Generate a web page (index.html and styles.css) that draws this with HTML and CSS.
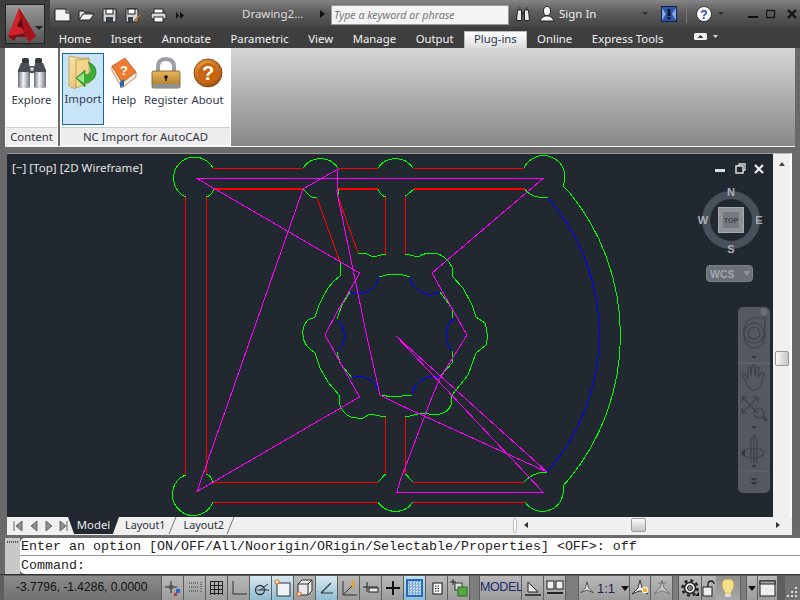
FILE: index.html
```html
<!DOCTYPE html>
<html lang="en">
<head>
<meta charset="utf-8">
<title>AutoCAD</title>
<link rel="stylesheet" href="styles.css">
</head>
<body>
<div class="app">
  <header class="head">
    <div class="logo">
      <svg width="40" height="40" viewBox="0 0 40 40">
        <path d="M14 4 L31 32 L24 38 L19 29 L11 31 L9 37 L3 32 Z" fill="#d3202a"/>
        <path d="M14 4 L31 32 L24 38 L19 29 L16 20 Z" fill="#a5141c"/>
        <path d="M12 22 L16 14 L19 25 Z" fill="#5c0d10"/>
        <path d="M3 32 L11 31 L19 29 L21 33 L11 33 L9 37 Z" fill="#7e1016"/>
        <path d="M30 22 h8 l-4 4 Z" fill="#222"/>
      </svg>
    </div>
    <div class="titlebar">
      <div class="qat">
        <svg class="q" width="17" height="14" viewBox="0 0 17 14"><path d="M1 1 H12 L16 5 V13 H1 Z" fill="#f2f2f2" stroke="#222"/><path d="M12 1 V5 H16" fill="#bbb" stroke="#222"/></svg>
        <svg class="q" width="17" height="14" viewBox="0 0 17 14"><path d="M1 3 H6 L7 5 H13 V7 H5 L1 12 Z" fill="#ddd" stroke="#222"/><path d="M5 6 H16 L12 12 H1 Z" fill="#f4f4f4" stroke="#222"/></svg>
        <svg class="q" width="15" height="15" viewBox="0 0 15 15"><rect x="1" y="1" width="13" height="13" rx="1" fill="#cfd3d8" stroke="#222"/><rect x="4" y="1" width="7" height="5" fill="#fff" stroke="#222"/><rect x="4" y="9" width="7" height="5" fill="#3a4048"/></svg>
        <svg class="q" width="17" height="15" viewBox="0 0 17 15"><rect x="1" y="1" width="12" height="13" rx="1" fill="#cfd3d8" stroke="#222"/><rect x="3" y="1" width="7" height="5" fill="#fff" stroke="#222"/><rect x="3" y="9" width="5" height="5" fill="#3a4048"/><path d="M9 13 L15 6 L16 7 L10 14 Z" fill="#e8912d" stroke="#6a3a10" stroke-width=".6"/></svg>
        <svg class="q" width="17" height="15" viewBox="0 0 17 15"><rect x="4" y="1" width="9" height="5" fill="#fff" stroke="#222"/><rect x="1" y="5" width="15" height="6" rx="2" fill="#d9d9d9" stroke="#222"/><rect x="4" y="9" width="9" height="5" fill="#fff" stroke="#222"/></svg>
        <svg class="q" width="8" height="7" viewBox="0 0 8 7"><path d="M0 0 L3 3.5 L0 7 Z M4 0 L8 3.5 L4 7 Z" fill="#111"/></svg>
      </div>
      <span class="doc">Drawing2...</span>
      <span class="tri"></span>
      <div class="search">Type a keyword or phrase</div>
      <svg class="bino" width="16" height="16" viewBox="0 0 16 16"><rect x="3" y="1" width="3" height="3" fill="#555"/><rect x="10" y="1" width="3" height="3" fill="#555"/><path d="M2.500 4 H6.500 V14.500 H1.500 Z M9.500 4 H13.500 L14.500 14.500 H9.500 Z" fill="#e8e8e8" stroke="#222"/><rect x="6.500" y="6" width="3" height="3" fill="#333"/></svg>
      <svg class="user" width="16" height="16" viewBox="0 0 16 16"><ellipse cx="8" cy="5" rx="3.5" ry="4.500" fill="#f4f4f4" stroke="#222"/><path d="M1 15 Q2 11 6 10 H10 Q14 11 15 15 Z" fill="#f4f4f4" stroke="#222"/></svg>
      <span class="sign">Sign In</span>
      <span class="drop"></span>
      <svg class="info" width="16" height="16" viewBox="0 0 16 16"><rect x=".5" y=".5" width="15" height="15" fill="#2d55a8" stroke="#0d1f55"/><path d="M1 2 L5 8 L1 14 Z M15 2 L11 8 L15 14 Z" fill="#8ea9dd"/><rect x="6.500" y="3" width="3" height="7" fill="#101830"/><rect x="6.500" y="11" width="3" height="2.500" fill="#101830"/></svg>
      <span class="vsep"></span>
      <svg class="help" width="16" height="16" viewBox="0 0 16 16"><circle cx="8" cy="8" r="7.500" fill="#fff" stroke="#333"/><text x="8" y="12.500" class="helpq">?</text></svg>
      <span class="drop drop2"></span>
      <div class="winbtns">
        <svg width="10" height="10" viewBox="0 0 10 10"><rect x="0" y="7" width="10" height="2" fill="#111"/></svg>
        <svg width="10" height="10" viewBox="0 0 10 10"><rect x=".5" y="1.500" width="8" height="7" fill="none" stroke="#111" stroke-width="1.300"/></svg>
        <svg width="10" height="10" viewBox="0 0 10 10"><path d="M1 1 L9 9 M9 1 L1 9" stroke="#111" stroke-width="2.200"/></svg>
      </div>
    </div>
    <nav class="tabs">
      <span class="tab">Home</span><span class="tab">Insert</span><span class="tab">Annotate</span><span class="tab">Parametric</span><span class="tab">View</span><span class="tab">Manage</span><span class="tab">Output</span><span class="tab active">Plug-ins</span><span class="tab">Online</span><span class="tab">Express Tools</span>
      <svg class="tabmin" width="24" height="7" viewBox="0 0 24 7"><rect x="0" y="0" width="13" height="7" rx="1.500" fill="#f0f0f0"/><path d="M3.500 5 L6.500 2 L9.500 5 Z" fill="#333"/><path d="M19 2 h5 l-2.500 3 Z" fill="#ddd"/></svg>
    </nav>
  </header>

  <section class="ribbon">
    <div class="panel panel-content">
      <div class="panel-body">
        <div class="rbtn rbtn-explore">
          <svg width="32" height="32" viewBox="0 0 32 32">
            <defs>
              <linearGradient id="steel" x1="0" x2="1" y1="0" y2="0"><stop offset="0" stop-color="#70757c"/><stop offset=".45" stop-color="#f2f3f5"/><stop offset="1" stop-color="#6d7279"/></linearGradient>
              <linearGradient id="fold" x1="0" x2="1" y1="0" y2="1"><stop offset="0" stop-color="#fbe6a8"/><stop offset="1" stop-color="#dcb162"/></linearGradient>
              <linearGradient id="gold" x1="0" x2="0" y1="0" y2="1"><stop offset="0" stop-color="#e9b75a"/><stop offset="1" stop-color="#a8742a"/></linearGradient>
              <radialGradient id="amber" cx=".4" cy=".3" r=".8"><stop offset="0" stop-color="#f6a743"/><stop offset="1" stop-color="#9a4708"/></radialGradient>
            </defs>
            <rect x="6" y="1" width="7" height="6" rx="2" fill="#33373c"/><rect x="19" y="1" width="7" height="6" rx="2" fill="#33373c"/>
            <path d="M5 6 H13 L14 13 V17 H2 V13 Z" fill="#4a4f55"/><path d="M19 6 H27 L30 13 V17 H18 V13 Z" fill="#4a4f55"/>
            <rect x="13" y="9" width="6" height="7" fill="#4a4f55"/><circle cx="16" cy="12" r="2" fill="#ccc"/>
            <rect x="2" y="15" width="12" height="16" rx="2" fill="url(#steel)"/><rect x="18" y="15" width="12" height="16" rx="2" fill="url(#steel)"/>
          </svg>
          <span>Explore</span>
        </div>
      </div>
      <div class="panel-title">Content</div>
    </div>
    <div class="panel panel-nc">
      <div class="panel-body">
        <div class="rbtn rbtn-import">
          <svg width="30" height="34" viewBox="0 0 30 34">
            <path d="M1 1 L12 3 H21 V28 L8 29 L7 34 L1 31 Z" fill="url(#fold)" stroke="#bc9a55" stroke-width=".8"/>
            <path d="M8 5 L21 4 V28 L8 33 Z" fill="#f3d68c" stroke="#bc9a55" stroke-width=".8"/>
            <path d="M20 7 Q29 10 28 19 Q26 27 17 28 V32 L8 23 L17 15 V20 Q22 20 23 16 Q23 11 20 7 Z" fill="#3dae34" stroke="#1f7a1c" stroke-width=".6"/>
            <path d="M16 18 V28 L9 23 Z" fill="#9ce58d"/>
          </svg>
          <span>Import</span>
        </div>
        <div class="rbtn rbtn-help">
          <svg width="28" height="32" viewBox="0 0 28 32">
            <path d="M2 9 L15 1 L26 15 L12 26 Z" fill="#ee7b31" stroke="#b9531a" stroke-width=".7"/>
            <path d="M2 9 L2 14 L12 31 L26 20 V15 L12 26 Z" fill="#f4efe5" stroke="#b9531a" stroke-width=".7"/>
            <path d="M10 25 l4 -3 v8 l-2 -1 l-2 2 Z" fill="#2a66b8"/>
            <text x="14" y="18" class="bookq">?</text>
          </svg>
          <span>Help</span>
        </div>
        <div class="rbtn rbtn-reg">
          <svg width="30" height="32" viewBox="0 0 30 32">
            <path d="M7 15 V10 Q7 2 15 2 Q23 2 23 10 V15" fill="none" stroke="#9aa0a6" stroke-width="4"/>
            <rect x="1" y="14" width="28" height="17" rx="1.500" fill="url(#gold)" stroke="#77551f" stroke-width=".8"/>
            <rect x="1.500" y="27" width="27" height="4" fill="#8f8f8f"/>
            <circle cx="15" cy="20" r="1.800" fill="#111"/><rect x="14.300" y="20" width="1.400" height="4" fill="#111"/>
          </svg>
          <span>Register</span>
        </div>
        <div class="rbtn rbtn-about">
          <svg width="30" height="30" viewBox="0 0 30 30">
            <circle cx="15" cy="15" r="14" fill="url(#amber)" stroke="#7b3906" stroke-width=".8"/>
            <circle cx="15" cy="15" r="10" fill="#c9650f"/>
            <text x="15" y="22" class="coinq">?</text>
          </svg>
          <span>About</span>
        </div>
      </div>
      <div class="panel-title">NC Import for AutoCAD</div>
    </div>
    <div class="ribbon-fill"></div>
  </section>
  <div class="ribbon-line"></div>
  <div class="strip"></div>

  <main class="work">
    <div class="view">
      <svg class="draw" width="766" height="363" viewBox="7 154 766 363" shape-rendering="crispEdges">
        <g class="red">
          <path d="M213 168 H303 M338 168 H378 M413 168 H524"/>
          <path d="M213 502 H378 M413 502 H525"/>
          <path d="M213 482 H378 M413 482 H524"/>
          <path d="M185.500 197 V475 M206.500 197 V474 M385.500 197 V254 M405.500 196 V254 M385.500 417 V474 M405.500 417 V474"/>
          <path d="M317 198 L340 262 M358 253 L337.500 195"/>
        </g>
        <g class="red thick"><path d="M214 189 H303 M338 189 H378 M414 189 H525"/></g>
        <g class="green">
          <path d="M185.500 197 A21 21 0 1 1 213 168"/>
          <path d="M303 168 A21 21 0 0 1 338 168"/>
          <path d="M378 168 A21 21 0 0 1 413 168"/>
          <path d="M524 168 A21 21 0 0 1 563 186 L570 193 A226.500 226.500 0 0 1 570 478 L563 486 A21 21 0 0 1 525 502"/>
          <path d="M185.500 475 A21 21 0 1 0 213 502"/>
          <path d="M378 502 A21 21 0 0 0 413 502"/>
          <path d="M206.500 197 Q212 195 214 189"/>
          <path d="M206.500 474 Q211 476 213 482"/>
          <path d="M303 189 L309 195 Q312 198 317 198"/>
          <path d="M338 195 V189"/>
          <path d="M378 189 Q380 195 385.500 197"/>
          <path d="M405.500 196 L414 189"/>
          <path d="M525 189 Q530 198 548 198"/>
          <path d="M385.500 474 L378 482"/>
          <path d="M405.500 474 L413 482"/>
          <path d="M524 482 Q533 472 547 472"/>
          <path d="M385.500 254 L373 257 L367 254 L358 253"/>
          <path d="M405.500 254 L418 257 Q424 253 431 253 Q445 253 452 267 V276 L463 288 L472 305 L476 317 L485 323 Q489 335 486 345 L476 353 L468 375 L452 395 L451 405 Q447 415 432 415 Q425 412 418 414 L405.500 417"/>
          <path d="M340 262 V276 L333 282 L328 288 L323 297 L319 305 L315 317 L308 320 Q302 326 303 335 Q303 345 315 353 L320 368 L328 382 L339 395 L340 405 Q345 418 357 418 L363 418 L370 414 L385.500 417"/>
          <path d="M379 277 L390 274 H400 L410 277"/>
          <path d="M350 292 L342 305 L337 319"/>
          <path d="M440 292 L452 308 L453 318"/>
          <path d="M337 352 L340 363 L352 378"/>
          <path d="M453 351 L452 363 L440 377"/>
          <path d="M380 395 L393 397 L412 395"/>
        </g>
        <g class="blue">
          <path d="M548 198 A207 207 0 0 1 547 472"/>
          <path d="M379 277 A21 21 0 0 1 350 292"/>
          <path d="M410 277 A21 21 0 0 0 440 292"/>
          <path d="M352 378 A21 21 0 0 1 380 395"/>
          <path d="M412 395 A21 21 0 0 1 440 378"/>
          <path d="M337 320 A21 21 0 0 1 337 352"/>
          <path d="M455 318 A21 21 0 0 0 453 351"/>
        </g>
        <path class="mag" d="M197 178.500 H543 L432 273 L467 335 L440 378 L430 402 L400 481 L397 492 H543 L396 336 L547 472 L400 405 L380 395 L366.500 335 L337 192 L338 169 L303 189 L197 491.500 L359.500 397 L325 335 L337 312 L357 278 L359.500 273 Z"/>
      </svg>

      <div class="viewlabel">[−] [Top] [2D Wireframe]</div>
      <svg class="vpctl" width="50" height="12" viewBox="0 0 50 12">
        <rect x="0" y="6" width="10" height="3" fill="#ddd"/>
        <rect x="21" y="3" width="7" height="7" fill="none" stroke="#ddd" stroke-width="1.500"/>
        <path d="M24 3 V1 H30 V7 H28" fill="none" stroke="#ddd" stroke-width="1.300"/>
        <path d="M40 2 L48 10 M48 2 L40 10" stroke="#eee" stroke-width="2.200"/>
      </svg>
      <svg class="cube" width="70" height="70" viewBox="0 0 70 70">
        <circle cx="35" cy="35" r="25" fill="none" stroke="#4a5059" stroke-width="8"/>
        <rect x="22.500" y="22.500" width="25" height="25" fill="#8e9296" stroke="#a8abaf"/>
        <rect x="27" y="27" width="16" height="16" fill="#767b82"/>
        <text x="35" y="38" class="cubetop">TOP</text>
        <text x="35" y="11" class="compass">N</text>
        <text x="35" y="68" class="compass">S</text>
        <text x="63" y="39" class="compass">E</text>
        <text x="7" y="39" class="compass">W</text>
      </svg>
      <div class="wcs"><span>WCS</span><i></i></div>
      <div class="navbar">
        <svg width="32" height="185" viewBox="0 0 32 185" fill="none" stroke="#3e4349" stroke-width="1.200">
          <circle cx="26" cy="5" r="3.500" fill="#6b7078" stroke="none"/>
          <path d="M6 26 Q6 12 16 11 H27 V25 Q27 41 16 41 Q6 41 6 26 Z"/>
          <circle cx="16" cy="26" r="10"/><circle cx="16" cy="26" r="6"/>
          <path d="M13 49 h6 l-3 3 Z" fill="#33373c" stroke="none"/>
          <path d="M0 56 H32" stroke="#62676e"/>
          <path d="M9 77 L4 68 L6 66 L10 71 L10 60 L12 60 L13 69 L14 58 L16 58 L17 69 L19 60 L21 61 L20 71 L24 65 L26 67 L23 78 Q20 84 14 83 Q11 82 9 77 Z"/>
          <path d="M4 90 L20 106 M20 90 L4 106 M4 90 h5 M4 90 v5 M20 90 h-5 M20 90 v5 M4 106 v-5 M4 106 h5" stroke-width="1.500"/>
          <circle cx="21" cy="106" r="5"/>
          <path d="M25 110 L29 114" stroke-width="3"/>
          <path d="M13 119 h6 l-3 3 Z" fill="#33373c" stroke="none"/>
          <path d="M16 128 V156 M12 134 L16 128 L20 134 M13 134 V156 M19 134 V156"/>
          <ellipse cx="15" cy="146" rx="11" ry="5"/>
          <path d="M3 146 L7 143 V149 Z" fill="#33373c" stroke="none"/>
          <path d="M13 158 h6 l-3 3 Z" fill="#33373c" stroke="none"/>
          <path d="M0 164 H32" stroke="#62676e"/>
          <path d="M12 171 h8 l-4 3 Z M12 175 h8 l-4 3 Z" fill="#33373c" stroke="none"/>
        </svg>
      </div>
    </div>
    <div class="vscroll">
      <span class="arrow-up"></span>
      <span class="vthumb"></span>
    </div>
    <div class="layoutrow">
      <div class="navarrows">
        <svg width="58" height="14" viewBox="0 0 58 14"><path d="M4 2 V12 M12 2 L6 7 L12 12 Z M27 2 L21 7 L27 12 Z M36 2 L42 7 L36 12 Z M50 2 L56 7 L50 12 Z M57 2 V12" fill="#8a8f95" stroke="#666"/></svg>
      </div>
      <span class="ltab ltab-on">Model</span>
      <span class="ltab">Layout1</span>
      <span class="ltab">Layout2</span>
      <div class="hscroll">
        <span class="hcap"></span>
        <span class="arrow-left"></span>
        <span class="hthumb"></span>
        <span class="arrow-right"></span>
      </div>
    </div>
  </main>

  <div class="strip2"></div>
  <section class="cmd">
    <div class="grip"><span class="dots"></span></div>
    <div class="cmdlines">
      <div class="cmdline cmdline-top">Enter an option [ON/OFF/All/Noorigin/ORigin/Selectable/Properties] &lt;OFF&gt;: off</div>
      <div class="cmdline">Command:</div>
    </div>
  </section>

  <footer class="status">
    <div class="coords">-3.7796, -1.4286, 0.0000</div>
    <div class="sb"><svg width="18" height="18" viewBox="0 0 18 18"><path d="M7 2 V14 M1 8 H13" stroke="#222"/><rect x="5" y="6" width="4" height="4" fill="#555"/><rect x="12" y="10" width="4" height="4" fill="#2a66c8"/><rect x="10" y="14" width="3" height="3" fill="#c33"/></svg></div>
    <div class="sb"><svg width="18" height="18" viewBox="0 0 18 18"><path d="M3 4 H12 M3 8 H12 M3 12 H12 M15 3 V10 M15 12 V14" stroke="#333" stroke-dasharray="1 1"/></svg></div>
    <div class="sb"><svg width="18" height="18" viewBox="0 0 18 18"><path d="M2.500 2 V16 M6.500 2 V16 M10.500 2 V16 M14.500 2 V16 M2 2.500 H15 M2 6.500 H15 M2 10.500 H15 M2 14.500 H15" stroke="#222"/></svg></div>
    <div class="sb"><svg width="18" height="18" viewBox="0 0 18 18"><path d="M3 2 V15 H17" fill="none" stroke="#333"/></svg></div>
    <div class="sb on"><svg width="18" height="18" viewBox="0 0 18 18"><circle cx="8" cy="11" r="4.500" fill="none" stroke="#333" stroke-width="1.300"/><path d="M8 11 L16 5 M5 11 H17" stroke="#333"/></svg></div>
    <div class="sb on"><svg width="18" height="18" viewBox="0 0 18 18"><rect x="3" y="4" width="13" height="13" fill="#eef3f6" stroke="#333"/><circle cx="3" cy="3" r="2" fill="#fff" stroke="#e06a1a" stroke-width="1.200"/></svg></div>
    <div class="sb"><svg width="18" height="18" viewBox="0 0 18 18"><path d="M2 5 L6 1 H16 V12 L12 16 H2 Z" fill="#e8e8e8" stroke="#333"/><path d="M2 5 H12 V16 M12 5 L16 1" fill="none" stroke="#333"/><circle cx="3" cy="15" r="2" fill="#fff" stroke="#e06a1a" stroke-width="1.200"/></svg></div>
    <div class="sb on"><svg width="18" height="18" viewBox="0 0 18 18"><path d="M3 14 H15 M3 14 L13 4" fill="none" stroke="#333" stroke-width="1.200"/></svg></div>
    <div class="sb"><svg width="18" height="18" viewBox="0 0 18 18"><path d="M3 2 V16 H17 M3 16 L12 7" fill="none" stroke="#333"/><path d="M13 1 L10 7 H13 L11 12 L16 5 H13 L15 1 Z" fill="#e5a12c"/></svg></div>
    <div class="sb"><svg width="18" height="18" viewBox="0 0 18 18"><path d="M5 3 V13 M1 8 H16" stroke="#222"/><rect x="7" y="9" width="9" height="4" fill="#eee" stroke="#222"/></svg></div>
    <div class="sb"><svg width="18" height="18" viewBox="0 0 18 18"><path d="M9 2 V16 M2 9 H16" stroke="#111" stroke-width="2"/></svg></div>
    <div class="sb sel"><span class="checker"></span></div>
    <div class="sb"><svg width="18" height="18" viewBox="0 0 18 18"><rect x="5" y="4" width="9" height="11" fill="#fff" stroke="#111"/><path d="M7 7 H12 M7 9.500 H12 M7 12 H12" stroke="#111" stroke-dasharray="1.500 1"/></svg></div>
    <div class="sb"><svg width="20" height="20" viewBox="0 0 20 20"><path d="M4 1 V7 M1 4 H7" stroke="#222"/><rect x="6" y="5" width="7" height="7" fill="#ddd" stroke="#333"/><rect x="9" y="9" width="9" height="9" fill="#55a83f" stroke="#2a6a1f"/></svg></div>
    <div class="gap gap1"></div>
    <div class="model">MODEL</div>
    <div class="sb"><svg width="18" height="18" viewBox="0 0 18 18"><path d="M4 3 V13 H14 Z" fill="#e8e8e8" stroke="#222"/><path d="M1 16 H17" stroke="#222" stroke-width="1.500"/></svg></div>
    <div class="sb"><svg width="18" height="18" viewBox="0 0 18 18"><rect x="1" y="2" width="7" height="8" fill="#eee" stroke="#222"/><rect x="10" y="2" width="7" height="8" fill="#eee" stroke="#222"/><path d="M1 14 H17" stroke="#222" stroke-width="2"/></svg></div>
    <div class="gap gap2"></div>
    <div class="sb anno"><svg width="18" height="18" viewBox="0 0 18 18"><path d="M9 1 L11 9 L17 15 L10 12 H8 L1 15 L7 9 Z" fill="#eee" stroke="#333"/></svg><span>1:1</span><i class="dk"></i></div>
    <div class="sb w20"><svg width="18" height="18" viewBox="0 0 18 18"><path d="M9 1 L11 9 L17 15 L10 12 H8 L1 15 L7 9 Z" fill="#eee" stroke="#333"/><circle cx="14" cy="11" r="3" fill="#f3b53a" stroke="#fff"/></svg></div>
    <div class="sb w21"><svg width="18" height="18" viewBox="0 0 18 18"><path d="M9 1 L11 9 L17 15 L10 12 H8 L1 15 L7 9 Z" fill="#c8c8c8" stroke="#777"/><path d="M5 4 L13 4" stroke="#777"/></svg></div>
    <div class="gap gap3"></div>
    <div class="sb w22"><svg width="18" height="18" viewBox="0 0 18 18"><circle cx="9" cy="9" r="5.500" fill="#eee" stroke="#222" stroke-width="1.500"/><circle cx="9" cy="9" r="7.500" fill="none" stroke="#222" stroke-width="2.500" stroke-dasharray="3 2.890"/><circle cx="9" cy="9" r="2.500" fill="#888" stroke="#222"/><path d="M14 17 L18 13 V17 Z" fill="#111"/></svg></div>
    <div class="sb w14"><svg width="14" height="18" viewBox="0 0 14 18"><rect x="1" y="8" width="9" height="9" fill="#eee" stroke="#222"/><path d="M6 8 V5 Q6 2 9 2 Q12 2 12 5" fill="none" stroke="#222" stroke-width="1.300"/></svg></div>
    <div class="bulb"><svg width="18" height="20" viewBox="0 0 18 20"><path d="M9 1 Q15 1 15 7 Q15 11 12 14 V16 H6 V14 Q3 11 3 7 Q3 1 9 1 Z" fill="#f5e28a" stroke="#bfae63"/><rect x="6" y="16" width="6" height="3" fill="#ddd"/></svg></div>
    <div class="gap gap4"></div>
    <div class="sb w10"><i class="dk"></i></div>
    <div class="sb w19"><svg width="17" height="17" viewBox="0 0 17 17"><rect x="1" y="1" width="15" height="15" fill="#eee" stroke="#222"/><rect x="1" y="1" width="15" height="3" fill="#aaa" stroke="#222"/></svg></div>
    <div class="resize"><svg width="14" height="14" viewBox="0 0 14 14"><path d="M10 2 h2 v2 h-2 Z M6 6 h2 v2 h-2 Z M10 6 h2 v2 h-2 Z M2 10 h2 v2 h-2 Z M6 10 h2 v2 h-2 Z M10 10 h2 v2 h-2 Z" fill="#ddd"/></svg></div>
  </footer>
</div>
</body>
</html>
```

FILE: styles.css
```css
* { box-sizing: border-box; }
html, body { margin: 0; height: 100%; }
body { overflow: hidden; background: #696969; font-family: "Noto Sans", "Liberation Sans", sans-serif; font-size: 11.350px; }
.app { width: 800px; height: 600px; display: flex; flex-direction: column; background: #696969; }

/* header */
.head { display: grid; grid-template-columns: 50px 1fr; grid-template-rows: 27px 21px; height: 48px; background: #3e3e3e; }
.logo { grid-row: 1 / 3; margin: 4px 0 4px 5px; width: 40px; height: 40px; background: linear-gradient(#999, #555); border: 1px solid #222; overflow: hidden; }
.logo svg { display: block; margin: -1px; }
.titlebar { display: flex; align-items: center; height: 27px; background: linear-gradient(#858585 0, #5c5c5c 45%, #454545 100%); color: #e8e8e8; position: relative; }
.qat { display: flex; align-items: center; width: 192px; padding-left: 4px; padding-top: 3px; }
.q { margin-right: 7px; flex: none; }
.q:nth-child(3), .q:nth-child(4) { margin-right: 8px; }
.q:nth-child(5) { margin-right: 9px; }
.doc { font-size: 11.500px; width: 78px; color: #ddd; }
.tri { width: 0; height: 0; border-left: 5px solid #111; border-top: 4px solid transparent; border-bottom: 4px solid transparent; margin-right: 6px; }
.search { width: 178px; height: 20px; background: #f4f4f4; border: 1px solid #999; font-style: italic; color: #777; font-size: 10.700px; line-height: 18px; padding-left: 2px; white-space: nowrap; overflow: hidden; margin-top: 3px; }
.bino { margin-left: 6px; }
.user { margin-left: 8px; }
.sign { margin-left: 4px; width: 83px; font-size: 11.500px; color: #eee; }
.drop { width: 0; height: 0; border-top: 3px solid #2c2c2c; border-left: 3px solid transparent; border-right: 3px solid transparent; margin-right: 13px; }
.vsep { width: 1px; height: 18px; background: #777; margin: 0 9px; }
.drop2 { margin: 0 24px 0 6px; }
.winbtns { display: flex; gap: 8px; align-items: center; }
.winbtns svg:nth-child(2) { margin-right: 3px; }
.helpq { font: bold 12px "Liberation Sans", sans-serif; fill: #1f49a8; text-anchor: middle; }

.tabs { display: flex; align-items: flex-end; height: 21px; color: #f2f2f2; font-size: 11.350px; }
.tab { padding: 0 9.800px; height: 17px; line-height: 17px; white-space: nowrap; margin-bottom: 1px; }
.tab:first-child { margin-left: -1px; }
.tab.active { height: 17px; margin: 0; background: linear-gradient(#ffffff, #dcdcdc); color: #2b3550; border: 1px solid #bbb; border-bottom: 0; padding: 0 9.500px; line-height: 14px; }
.tabmin { margin: 0 0 8px 21px; }

/* ribbon */
.ribbon { display: flex; height: 98px; padding-left: 5px; }
.panel { background: #fff; display: flex; flex-direction: column; }
.panel-content { width: 53px; margin-right: 2px; }
.panel-nc { width: 171px; }
.panel-body { flex: 1; display: flex; padding: 5px 0 0 0; }
.panel-title { height: 18px; margin: 0 1px 1px; background: #eeeeee; border-top: 1px solid #ccc; color: #334; text-align: center; line-height: 17px; font-size: 11.350px; white-space: nowrap; }
.ribbon-fill { flex: 1; margin-right: 5px; background: linear-gradient(#d6d6d6, #878787); }
.rbtn { display: flex; flex-direction: column; align-items: center; color: #323a4d; font-size: 11.350px; height: 72px; gap: 2px; }
.rbtn span { line-height: 16px; white-space: nowrap; }
.rbtn svg { display: block; height: 34px; flex: none; }
.rbtn-explore { width: 53px; padding-top: 3px; }
.rbtn-import { width: 42px; margin-left: 2px; background: #c8e4f7; border: 1px solid #1167ac; padding-top: 1px; }
.rbtn-help { width: 40px; padding-top: 3px; }
.rbtn-reg { width: 44px; padding-top: 3px; }
.rbtn-about { width: 39px; padding-top: 3px; }
.bookq { font: bold 13px "Liberation Sans", sans-serif; fill: #fff; text-anchor: middle; }
.coinq { font: bold 20px "Liberation Sans", sans-serif; fill: #fff; text-anchor: middle; }
.ribbon-line { height: 1px; margin: 0 5px; background: #f4f4f4; }
.strip { height: 6px; background: #6b6b6b; }

/* work area */
.work { display: grid; grid-template-columns: 766px 19px; grid-template-rows: 364px 18px; height: 382px; padding-left: 7px; }
.view { position: relative; background: #212830; border-top: 1px solid #9a9a9a; overflow: hidden; }
.draw { display: block; }
.draw g, .draw path { fill: none; stroke-width: 1; }
.red path { stroke: #ff0000; }
.thick path { stroke-width: 2; }
.green path { stroke: #00ff00; }
.blue path { stroke: #0000ff; }
.mag { stroke: #ff00ff; }
.viewlabel { position: absolute; left: 5px; top: 6px; color: #e6e6e6; font-size: 11.600px; }
.vpctl { position: absolute; left: 708px; top: 9px; }
.cube { position: absolute; left: 689px; top: 31px; }
.cubetop { font: bold 7px "Liberation Sans", sans-serif; fill: #3a3f46; text-anchor: middle; }
.compass { font: bold 11px "Liberation Sans", sans-serif; fill: #aab0b6; text-anchor: middle; }
.wcs { position: absolute; left: 699px; top: 111px; width: 47px; height: 17px; border-radius: 4px; background: #6b7079; border: 1px solid #7c8088; color: #a3a7ae; display: flex; align-items: center; font: bold 10.500px "Liberation Sans", sans-serif; padding-left: 3px; gap: 8px; }
.wcs i { width: 0; height: 0; border-top: 5px solid #8b8f96; border-left: 4px solid transparent; border-right: 4px solid transparent; }
.navbar { position: absolute; left: 731px; top: 153px; width: 32px; height: 186px; background: #545960; border-radius: 5px; }
.navbar svg { display: block; }

.vscroll { grid-row: 1; grid-column: 2; background: #f0f0f0; position: relative; border-top: 1px solid #bbb; border-right: 2px solid #fff; }
.arrow-up { position: absolute; top: 8px; left: 6px; border-bottom: 4px solid #444; border-left: 3px solid transparent; border-right: 3px solid transparent; }
.vthumb { position: absolute; top: 197px; left: 2px; width: 14px; height: 15px; background: linear-gradient(90deg, #fafafa, #c4c4c4); border: 1px solid #999; border-radius: 2px; }

.layoutrow { grid-row: 2; grid-column: 1 / 3; display: flex; align-items: stretch; background: #f0f0f0; font-size: 10.800px; color: #2b3040; }
.navarrows { width: 61px; padding: 2px 0 0 3px; display: flex; }
.ltab { height: 17px; line-height: 16px; padding: 0 4px; white-space: nowrap; margin-right: 10px; position: relative; }
.ltab::after { content: ""; position: absolute; right: -3px; top: 0; width: 1px; height: 17px; background: #777; transform: skewX(-22deg); }
.ltab-on { width: 51px; background: #212830; color: #e8e8e8; text-align: center; margin-right: 2px; font-size: 11.350px; clip-path: polygon(0 0, 100% 0, 88% 100%, 12% 100%); }
.ltab-on::after { display: none; }
.hscroll { margin-left: auto; width: 279px; position: relative; }
.hcap { position: absolute; left: 0; top: 1px; width: 4px; height: 15px; background: #fff; border: 1px solid #bbb; border-radius: 2px; }
.arrow-left { position: absolute; left: 11px; top: 5px; border-right: 4px solid #333; border-top: 3px solid transparent; border-bottom: 3px solid transparent; }
.arrow-right { position: absolute; left: 263px; top: 5px; border-left: 4px solid #333; border-top: 3px solid transparent; border-bottom: 3px solid transparent; }
.hthumb { position: absolute; left: 118px; top: 1px; width: 15px; height: 14px; background: linear-gradient(#fafafa, #c4c4c4); border: 1px solid #999; border-radius: 2px; }

.strip2 { height: 3px; background: #6b6b6b; }

/* command line */
.cmd { height: 36px; display: flex; padding-left: 5px; }
.grip { width: 15px; background: #c8c8c8; padding: 3px 0 0 2px; }
.dots { display: block; width: 11px; height: 2px; background: repeating-linear-gradient(90deg, #555 0 1px, transparent 1px 2px); }
.cmdlines { flex: 1; background: #fff; border-radius: 5px 0 0 5px; }
.cmdline { height: 18px; font: 13.330px/19px "Liberation Mono", monospace; color: #222; padding-left: 1px; white-space: pre; }
.cmdline-top { border-bottom: 1px solid #999; line-height: 18px; }

/* status bar */
.status { height: 26px; flex: none; display: flex; align-items: stretch; gap: 1px; padding-left: 4px; padding-top: 1px; background: #5e5e5e; border-top: 1px solid #333; font-family: "Liberation Sans", sans-serif; }
.coords { width: 157px; flex: none; background: linear-gradient(#8b8b8b, #707070); color: #111; font-size: 12px; line-height: 23px; padding-left: 12px; white-space: nowrap; }
.sb { width: 21px; background: linear-gradient(#b9b9b9, #9c9c9c); display: flex; align-items: center; justify-content: center; flex: none; }
.sb.on { background: linear-gradient(#d8e8ef, #8fbdd3); }
.sb.sel { background: linear-gradient(#c6dfeb, #8fbdd3); }
.checker { width: 17px; height: 18px; border: 2px solid #1f6cc0; background: repeating-conic-gradient(#7fa8d4 0 25%, #c8dcf0 0 50%) 0 0 / 3px 3px; }
.gap { background: #7d7d7d; flex: none; }
.gap1 { width: 9px; }
.gap2 { width: 12px; }
.gap3 { width: 5px; }
.gap4 { width: 5px; }
.model { width: 41px; background: linear-gradient(#b9b9b9, #9c9c9c); color: #1c2a6c; font-size: 12.500px; line-height: 23px; text-align: center; flex: none; letter-spacing: -.4px; white-space: nowrap; }
.anno { width: 50px; justify-content: flex-start; gap: 3px; color: #2c1a55; font-size: 13px; padding-left: 1px; }
.dk, .sb i { display: inline-block; width: 0; height: 0; border-top: 5px solid #111; border-left: 4px solid transparent; border-right: 4px solid transparent; margin-left: 3px; }
.w10 { width: 10px; }
.w10 i { margin-left: 0; }
.w14 { width: 14px; }
.w19 { width: 19px; }
.w20 { width: 20px; }
.w21 { width: 21px; }
.w22 { width: 22px; }
.bulb { width: 24px; margin-left: -1px; background: linear-gradient(#8f8f8f, #a8a8a8); display: flex; align-items: center; justify-content: center; flex: none; }
.resize { width: 15px; margin-left: 7px; display: flex; align-items: flex-end; justify-content: flex-end; background: #727272; padding: 0 1px 1px 0; flex: none; }
```
